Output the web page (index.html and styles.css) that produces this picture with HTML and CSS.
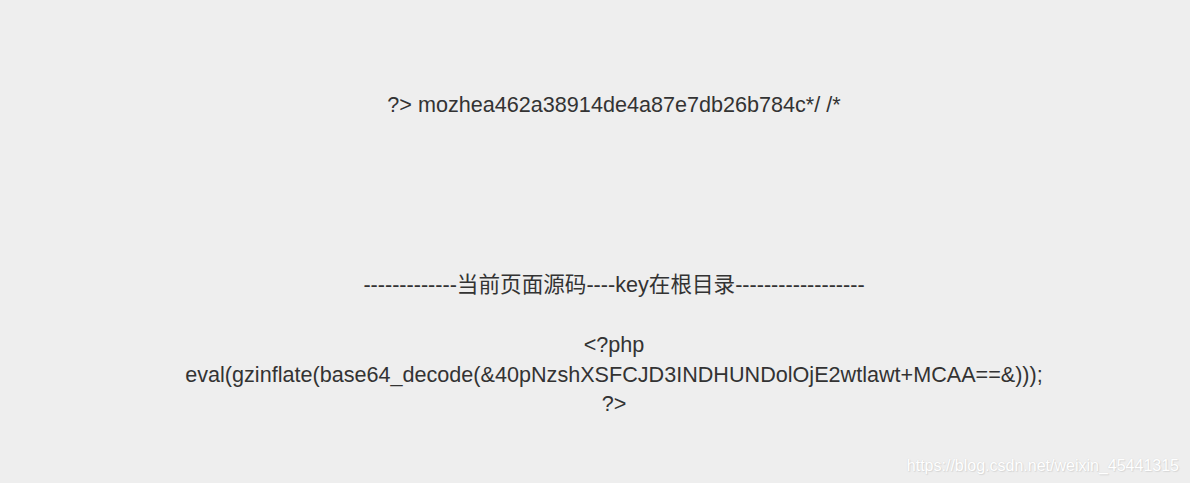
FILE: index.html
```html
<!DOCTYPE html>
<html>
<head>
<meta charset="utf-8">
<link rel="stylesheet" href="styles.css">
</head>
<body>
<div class="page">
  <p class="hint">?&gt; mozhea462a38914de4a87e7db26b784c*/ /*</p>
  <p class="divider">-------------当前页面源码----key在根目录------------------</p>
  <div class="code">
    <div>&lt;?php</div>
    <div>eval(gzinflate(base64_decode(&amp;40pNzshXSFCJD3INDHUNDolOjE2wtlawt+MCAA==&amp;)));</div>
    <div>?&gt;</div>
  </div>
</div>
<div class="watermark">https://blog.csdn.net/weixin_45441315</div>
</body>
</html>
```
FILE: styles.css
```css
html, body {
  margin: 0;
  padding: 0;
  height: 100%;
  background: #eeeeee;
  overflow: hidden;
}
body {
  font-family: "Liberation Sans", Arial, "Noto Sans CJK SC", sans-serif;
  color: #333333;
  font-size: 21.6px;
  position: relative;
}
.page {
  margin-left: 38px;
  text-align: center;
  padding-top: 90px;
}
.hint {
  margin: 0;
  line-height: 30px;
}
.divider {
  margin: 150px 0 0 0;
  line-height: 30px;
}
.code {
  margin-top: 30px;
  line-height: 29.5px;
}
.watermark {
  position: absolute;
  right: 11px;
  bottom: 8px;
  font-size: 16px;
  color: #ffffff;
  text-shadow: 0 0 1px #cfcfcf, 1px 1px 1px #d8d8d8;
}
```
